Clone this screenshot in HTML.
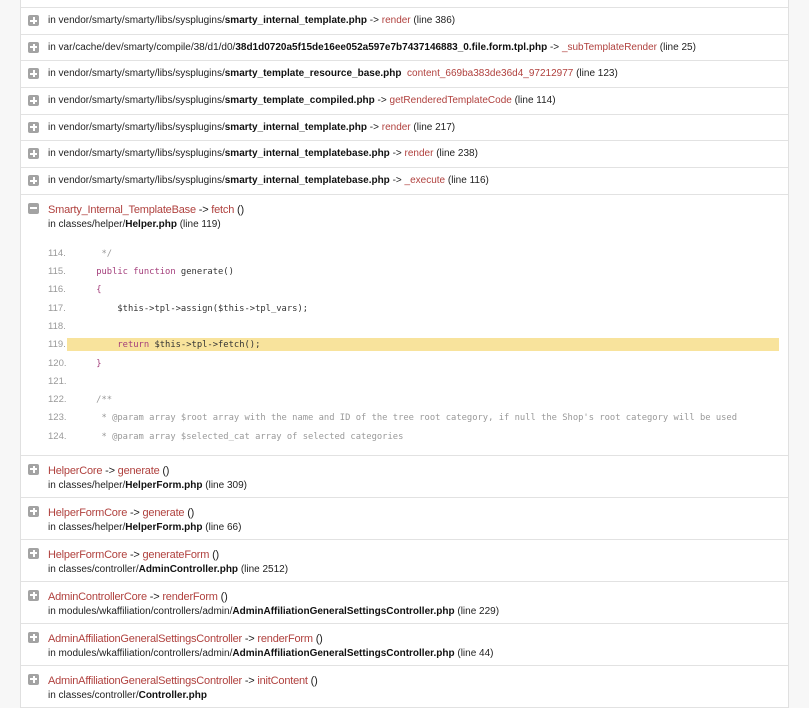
<!DOCTYPE html>
<html><head><meta charset="utf-8"><style>
body{margin:0;background:#f7f7f7;font-family:"Liberation Sans",Arial,sans-serif;font-size:10px;color:#222;width:809px;height:682px;overflow:hidden;position:relative}
.c{position:absolute;left:20px;width:767px;top:-18.7px;background:#fff;border-left:1px solid #e0e0e0;border-right:1px solid #e0e0e0}
.r{border-bottom:1px solid #e2e2e2;position:relative;padding-left:27px;box-sizing:border-box}
.s{height:26.7px;line-height:26px}
.d{height:42px;padding-top:8px;line-height:14px}
.i{position:absolute;left:7px;width:11px;height:11px;border-radius:2px;background:#a3a3a3}
.s .i{top:7px}.d .i{top:8px}
.i:before{content:"";position:absolute;left:2px;top:4.5px;width:7px;height:2px;background:#fff}
.p .i:after{content:"";position:absolute;left:4.5px;top:2px;width:2px;height:7px;background:#fff}
b{font-weight:bold;color:#111}
.m{color:#b0413e}
.t{font-size:11px;letter-spacing:-0.2px}
.code{font-family:"DejaVu Sans Mono","Liberation Mono",monospace;font-size:8.8px;color:#333;margin-top:13px;position:relative}
.l{height:18.3px;line-height:18.3px;position:relative;white-space:pre}
.n{position:absolute;left:0;width:20px;color:#999;font-family:"Liberation Sans",Arial,sans-serif;font-size:9.5px}
.x{position:absolute;left:27px}
.h{background:#f8e39c;left:19px;width:712px;position:absolute;top:2px;height:13px}
.k{color:#a33d7a}.cm{color:#999}
</style></head><body><div class="c">
<div class="r s p"><span class="i"></span>in vendor/smarty/smarty/libs/sysplugins/<b>smarty_internal_templatebase.php</b> -&gt; <span class="m">_execute</span> (line 116)</div>
<div class="r s p"><span class="i"></span>in vendor/smarty/smarty/libs/sysplugins/<b>smarty_internal_template.php</b> -&gt; <span class="m">render</span> (line 386)</div>
<div class="r s p"><span class="i"></span>in var/cache/dev/smarty/compile/38/d1/d0/<b>38d1d0720a5f15de16ee052a597e7b7437146883_0.file.form.tpl.php</b> -&gt; <span class="m">_subTemplateRender</span> (line 25)</div>
<div class="r s p"><span class="i"></span>in vendor/smarty/smarty/libs/sysplugins/<b>smarty_template_resource_base.php</b> &nbsp;<span class="m">content_669ba383de36d4_97212977</span> (line 123)</div>
<div class="r s p"><span class="i"></span>in vendor/smarty/smarty/libs/sysplugins/<b>smarty_template_compiled.php</b> -&gt; <span class="m">getRenderedTemplateCode</span> (line 114)</div>
<div class="r s p"><span class="i"></span>in vendor/smarty/smarty/libs/sysplugins/<b>smarty_internal_template.php</b> -&gt; <span class="m">render</span> (line 217)</div>
<div class="r s p"><span class="i"></span>in vendor/smarty/smarty/libs/sysplugins/<b>smarty_internal_templatebase.php</b> -&gt; <span class="m">render</span> (line 238)</div>
<div class="r s p"><span class="i"></span>in vendor/smarty/smarty/libs/sysplugins/<b>smarty_internal_templatebase.php</b> -&gt; <span class="m">_execute</span> (line 116)</div>
<div class="r" style="height:261px;padding-top:8px;line-height:14px"><span class="i" style="top:8px"></span><span class="t"><span class="m">Smarty_Internal_TemplateBase</span> -&gt; <span class="m">fetch</span> ()</span><br>in classes/helper/<b>Helper.php</b> (line 119)
<div class="code">
<div class="l"><span class="n">114.</span><span class="x cm">     */</span></div>
<div class="l"><span class="n">115.</span><span class="x">    <span class="k">public function</span> generate()</span></div>
<div class="l"><span class="n">116.</span><span class="x">    <span class="k">{</span></span></div>
<div class="l"><span class="n">117.</span><span class="x">        $this-&gt;tpl-&gt;assign($this-&gt;tpl_vars);</span></div>
<div class="l"><span class="n">118.</span></div>
<div class="l"><span class="h"></span><span class="n">119.</span><span class="x">        <span class="k">return</span> $this-&gt;tpl-&gt;fetch();</span></div>
<div class="l"><span class="n">120.</span><span class="x">    <span class="k">}</span></span></div>
<div class="l"><span class="n">121.</span></div>
<div class="l"><span class="n">122.</span><span class="x cm">    /**</span></div>
<div class="l"><span class="n">123.</span><span class="x cm">     * @param array $root array with the name and ID of the tree root category, if null the Shop's root category will be used</span></div>
<div class="l"><span class="n">124.</span><span class="x cm">     * @param array $selected_cat array of selected categories</span></div>
</div></div>
<div class="r d p"><span class="i"></span><span class="t"><span class="m">HelperCore</span> -&gt; <span class="m">generate</span> ()</span><br>in classes/helper/<b>HelperForm.php</b> (line 309)</div>
<div class="r d p"><span class="i"></span><span class="t"><span class="m">HelperFormCore</span> -&gt; <span class="m">generate</span> ()</span><br>in classes/helper/<b>HelperForm.php</b> (line 66)</div>
<div class="r d p"><span class="i"></span><span class="t"><span class="m">HelperFormCore</span> -&gt; <span class="m">generateForm</span> ()</span><br>in classes/controller/<b>AdminController.php</b> (line 2512)</div>
<div class="r d p"><span class="i"></span><span class="t"><span class="m">AdminControllerCore</span> -&gt; <span class="m">renderForm</span> ()</span><br>in modules/wkaffiliation/controllers/admin/<b>AdminAffiliationGeneralSettingsController.php</b> (line 229)</div>
<div class="r d p"><span class="i"></span><span class="t"><span class="m">AdminAffiliationGeneralSettingsController</span> -&gt; <span class="m">renderForm</span> ()</span><br>in modules/wkaffiliation/controllers/admin/<b>AdminAffiliationGeneralSettingsController.php</b> (line 44)</div>
<div class="r d p"><span class="i"></span><span class="t"><span class="m">AdminAffiliationGeneralSettingsController</span> -&gt; <span class="m">initContent</span> ()</span><br>in classes/controller/<b>Controller.php</b></div>
</div></body></html>
